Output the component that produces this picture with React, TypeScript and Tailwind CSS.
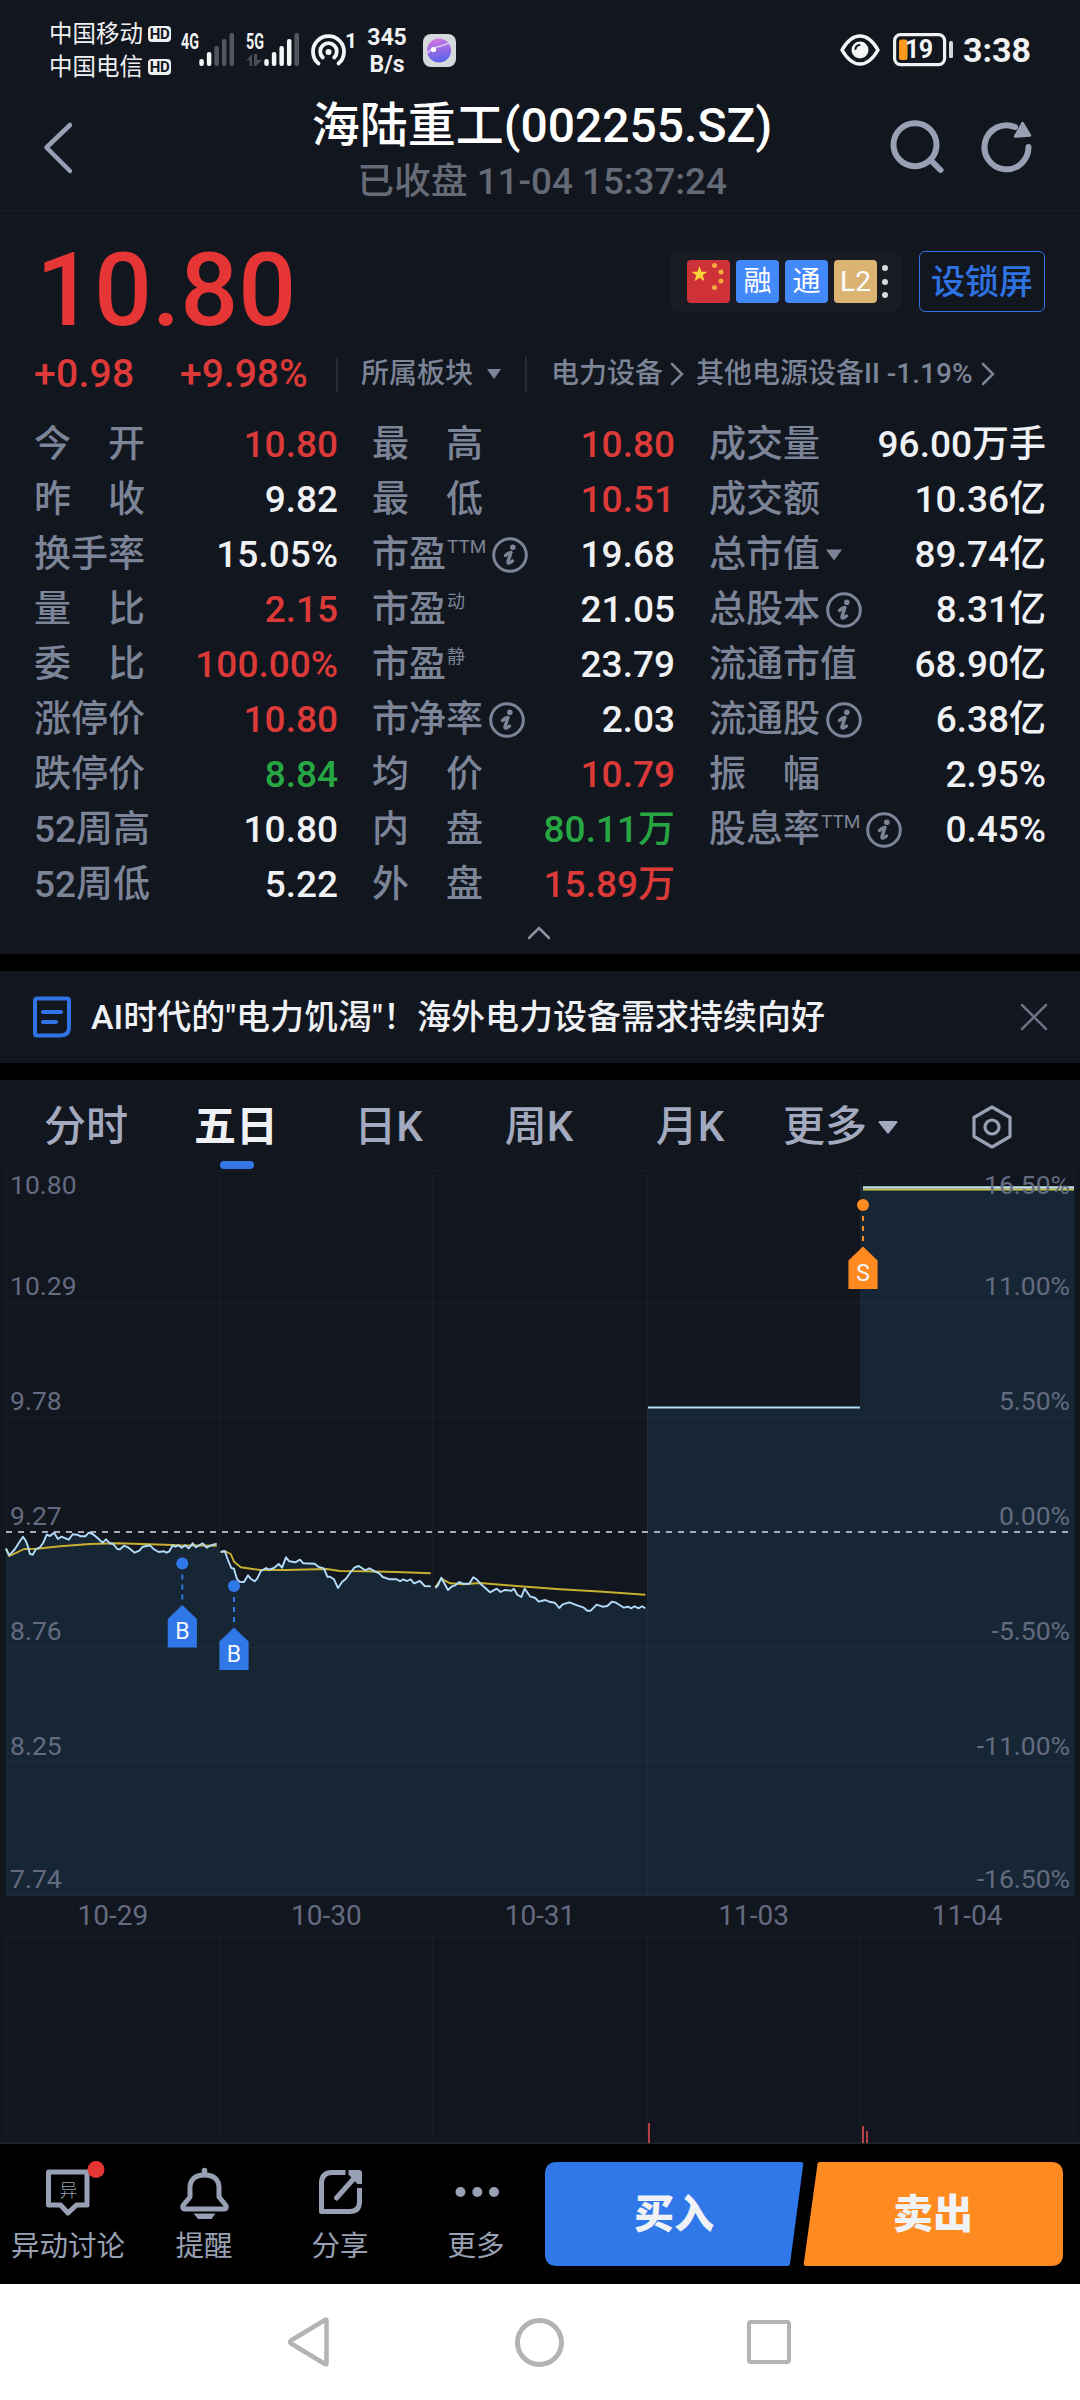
import React from 'react';

type Tone = 'up' | 'down' | 'flat';

interface Stat {
  label: string;
  value: string;
  tone?: Tone;
  sup?: string;
  info?: boolean;
  caret?: boolean;
}

const toneClass: Record<Tone, string> = {
  up: 'text-[#dc3a39]',
  down: 'text-[#27a744]',
  flat: 'text-[#f0f1f5]',
};

const statColumns: Stat[][] = [
  [
    { label: '今开', value: '10.80', tone: 'up' },
    { label: '昨收', value: '9.82' },
    { label: '换手率', value: '15.05%' },
    { label: '量比', value: '2.15', tone: 'up' },
    { label: '委比', value: '100.00%', tone: 'up' },
    { label: '涨停价', value: '10.80', tone: 'up' },
    { label: '跌停价', value: '8.84', tone: 'down' },
    { label: '52周高', value: '10.80' },
    { label: '52周低', value: '5.22' },
  ],
  [
    { label: '最高', value: '10.80', tone: 'up' },
    { label: '最低', value: '10.51', tone: 'up' },
    { label: '市盈', sup: 'TTM', info: true, value: '19.68' },
    { label: '市盈', sup: '动', value: '21.05' },
    { label: '市盈', sup: '静', value: '23.79' },
    { label: '市净率', info: true, value: '2.03' },
    { label: '均价', value: '10.79', tone: 'up' },
    { label: '内盘', value: '80.11万', tone: 'down' },
    { label: '外盘', value: '15.89万', tone: 'up' },
  ],
  [
    { label: '成交量', value: '96.00万手' },
    { label: '成交额', value: '10.36亿' },
    { label: '总市值', caret: true, value: '89.74亿' },
    { label: '总股本', info: true, value: '8.31亿' },
    { label: '流通市值', value: '68.90亿' },
    { label: '流通股', info: true, value: '6.38亿' },
    { label: '振幅', value: '2.95%' },
    { label: '股息率', sup: 'TTM', info: true, value: '0.45%' },
  ],
];

// price and average lines, one entry per trading day
const priceLines = [
  '6,378.3 9.3,385.3 15,379 20,371 23,366.7 25.7,370.7 28,376.7 30,384 32.7,384.7 36,379 40,377.3 43.3,372.7 46.7,364.7 50,366 54,362.7 58,369 61.3,366.7 68.7,369.7 72.7,364.3 77.3,364.7 80.7,366.3 85.3,366.3 88.7,362.7 92.7,364 96.7,367.3 102.7,372.7 106,369.3 110,373.3 113.3,374 117.3,379 120,379.3 124,375.7 128,377.3 134.7,382.7 139.3,380.7 142.7,376.7 150,375.3 154,379.3 158.7,382 164,381.3 166.7,382.7 169.3,381.3 172.7,375.3 175.3,376.7 178.7,375.3 181.7,377.7 185.3,375.3 188.7,378.3 192.7,373.3 196,377.3 202.7,373.3 206.7,377.7 210.7,375.3 216.7,373.7',
  '220.7,382 224.7,381 228,390 231.3,398 234,398.7 236.7,408.3 239.3,411.7 244,412 248,405.3 250.7,408.7 254.7,411.3 257.3,408.3 260.7,401.3 266,398 269.3,399.7 274,398 278.7,394 282,397.7 286,387.3 289.3,391.3 295.3,392.3 300,389.7 303.3,393.3 314.7,393.7 318.7,397 324,398.3 327.3,406.7 330,406.7 334,409.3 338,418 342,412 346,408.7 350,403 354.7,397.3 358.7,396 365.3,400.3 369.3,398.3 375.3,401.7 379.3,403.3 382.7,407 390,409.3 396.7,409.3 400,411.3 403.3,409.3 406.7,411 410.7,409.3 414,413.3 420,411 424.7,416 430.7,416.3',
  '435.3,418 438,415.3 441.3,407.7 444.7,414 448,420 452,416.3 455.3,415.3 459.3,412 462.7,413.7 469.3,413.7 473.3,407.3 476.7,409.3 480.7,414 485.3,418 490,422.3 496.7,418.7 500.7,422 504.7,420 511.3,420.7 514,418.7 517.3,424.7 521.3,427 524.7,418.7 530,426.3 535.3,428 538.7,431.7 545.3,430 549.3,431.7 554.7,432.7 559.3,438 562.7,434.3 569.3,432.3 578,435.7 583.3,437.3 587.3,440.7 590.7,440.7 596.7,434.7 602.7,436.7 607.3,436 612,431.7 616,432.7 624,437.7 628,436.7 631.3,438.3 634.7,436.3 638.7,438.3 642,436.3 645.3,438.3',
];
const averageLines = [
  '6,379 9.3,386 16.7,382.7 24,379 36.7,378.7 60,376.3 90,374 116.7,373.3 150,374.3 180,375.3 216.7,375.7',
  '220.7,382 225.3,381.3 230.7,384 234,391.7 240.7,397.3 260,400 286.7,400 326.7,399 340,401 363.3,401.3 396.7,402 430.7,403.3',
  '435.3,417.3 441.3,408.7 450,413.3 463.3,414.3 480,413 513.3,415.7 560,419.3 603.3,421.7 645.3,424.7',
];

const axisLabels = [
  { y: 24, price: '10.80', pct: '16.50%' },
  { y: 125, price: '10.29', pct: '11.00%' },
  { y: 240, price: '9.78', pct: '5.50%' },
  { y: 355, price: '9.27', pct: '0.00%' },
  { y: 470, price: '8.76', pct: '-5.50%' },
  { y: 585, price: '8.25', pct: '-11.00%' },
  { y: 718, price: '7.74', pct: '-16.50%' },
];

const dayLines = [6.5, 219.5, 432.5, 647.5, 860.5, 1074];

const SignalBars = ({ label, active, data }: { label: string; active: number; data?: boolean }) => (
  <svg width="55" height="36" viewBox="0 0 55 36" className="shrink-0 overflow-visible">
    <text x="0" y="16.5" fontSize="22" fontWeight="700" fill="#f0f1f3" textLength="18" lengthAdjust="spacingAndGlyphs">{label}</text>
    {data && <path d="M0 29l6-7v12H3.500v-6zM8 22h3v6h5l-6 6H8z" fill="#4b4e55" />}
    {[27, 20, 14, 7, 1].map((top, i) => (
      <rect key={i} x={18.300 + i * 7.550} y={top} width="4.500" height={34 - top} rx="2" fill={i < active ? '#f4f5f7' : '#53565d'} />
    ))}
  </svg>
);

const HdBadge = () => (
  <span className="flex h-[16px] w-[23px] items-center justify-center rounded-[4px] bg-[#eff0f2] text-[15px] font-bold leading-none tracking-[-0.5px] text-[#12161e]">HD</span>
);

const StatusBar = () => (
  <div className="flex h-[100px] items-start text-[#f0f1f3]">
    <div className="ml-[49px] mt-[22px] flex w-[122px] flex-col gap-[9px] text-[23.500px] leading-[24px]">
      <div className="flex items-center justify-between whitespace-nowrap">中国移动<HdBadge /></div>
      <div className="flex items-center justify-between whitespace-nowrap">中国电信<HdBadge /></div>
    </div>
    <div className="ml-[10px] mt-[32px]"><SignalBars label="4G" active={2} /></div>
    <div className="ml-[10px] mt-[32px]"><SignalBars label="5G" active={4} data /></div>
    <svg width="48" height="36" viewBox="0 0 48 36" className="ml-[9px] mt-[32px] overflow-visible" fill="none" stroke="#f4f5f7" strokeWidth="3.800" strokeLinecap="round">
      <path d="M8.500 31.500A15.500 15.500 0 1 1 28.500 31.500" />
      <path d="M12.800 25.500A8.300 8.300 0 1 1 24.200 25.500" />
      <circle cx="18.500" cy="20" r="3" fill="#f4f5f7" stroke="none" />
      <text x="35" y="15.500" fontSize="21" fontWeight="700" fill="#f4f5f7" stroke="none">1</text>
    </svg>
    <div className="ml-[8px] mt-[24px] w-[42px] text-center text-[23px] font-bold leading-[27px]">345<br />B/s</div>
    <svg width="34" height="34" viewBox="0 0 34 34" className="ml-[15px] mt-[34px]">
      <defs>
        <linearGradient id="orb" x1="0" y1="0" x2="0.200" y2="1">
          <stop offset="0" stopColor="#d977e0" />
          <stop offset="1" stopColor="#5f63ea" />
        </linearGradient>
      </defs>
      <rect width="33" height="33" rx="8" fill="#d6d9dc" />
      <circle cx="16" cy="16.500" r="12" fill="url(#orb)" />
      <path d="M4 19q6-5 10-6t13-4" stroke="#d6bff3" strokeWidth="1.800" fill="none" />
      <circle cx="10.500" cy="15.500" r="2.600" fill="#fff" />
    </svg>

    <div className="ml-auto mr-[49px] mt-[33px] flex items-center">
      <svg width="40" height="34" viewBox="0 0 40 34" fill="none">
        <path d="M2 17Q10 3 20 3t18 14Q30 31 20 31T2 17z" stroke="#f4f5f7" strokeWidth="3.500" strokeLinejoin="round" />
        <circle cx="20" cy="17" r="8.500" fill="#f4f5f7" />
        <path d="M15.500 16q.3-3.500 4-4" stroke="#12161e" strokeWidth="2" strokeLinecap="round" />
      </svg>
      <svg width="62" height="34" viewBox="0 0 62 34" className="ml-[13px]">
        <rect x="1.600" y="1.600" width="50" height="30" rx="6" fill="none" stroke="#f1f1f3" strokeWidth="3.200" />
        <rect x="56" y="8" width="4" height="17" rx="1.500" fill="#d5d6da" />
        <rect x="6" y="6.500" width="8.500" height="20.500" rx="2.500" fill="#fe9a1b" />
        <text x="12" y="25" fontSize="25" fontWeight="700" fill="#f4f5f7" textLength="28">19</text>
      </svg>
      <span className="ml-[8px] text-[34px] font-bold leading-[34px]">3:38</span>
    </div>
  </div>
);

const Header = () => (
  <div className="flex h-[111px] items-start border-b border-[#191d25]">
    <div className="w-[200px] pl-[41px] pt-[19px]">
      <svg width="34" height="56" viewBox="0 0 34 56" fill="none" stroke="#98a0b4" strokeWidth="4.500" strokeLinecap="round" strokeLinejoin="round">
        <path d="M29 6L5.500 28.500L29 52" />
      </svg>
    </div>
    <div className="flex-1 whitespace-nowrap text-center">
      <div className="-mt-[2px] text-[48px] font-medium leading-[56px] text-white">海陆重工(002255.SZ)</div>
      <div className="mt-[7px] text-[36.800px] font-medium leading-[42px] text-[#656a77]">已收盘 11-04 15:37:24</div>
    </div>
    <div className="flex w-[196px] justify-end gap-[34px] pr-[48px] pt-[19px]">
      <svg width="56" height="56" viewBox="0 0 56 56" fill="none" stroke="#98a0b4" strokeWidth="6" strokeLinecap="round">
        <circle cx="27" cy="25.700" r="21.500" />
        <path d="M43 41.500L52.500 51" />
      </svg>
      <svg width="54" height="56" viewBox="0 0 54 56" fill="none" stroke="#98a0b4" strokeWidth="6" strokeLinecap="round">
        <path d="M50.500 28A22 22 0 1 1 37 8" />
        <path d="M44.500 4L52 16.500L37 17.500z" fill="#98a0b4" strokeWidth="2.500" strokeLinejoin="round" />
      </svg>
    </div>
  </div>
);

const InfoIcon = () => (
  <svg width="36" height="36" viewBox="0 0 36 36" className="ml-[6px] shrink-0" fill="none" stroke="#7c8497">
    <circle cx="18" cy="18" r="16.300" strokeWidth="3" />
    <circle cx="20.800" cy="10.300" r="2.800" fill="#7c8497" stroke="none" />
    <path d="M13.500 18.500q2-2.500 5.500-3L16 24.500q-.5 3.500 4.500-.5" strokeWidth="3.400" strokeLinecap="round" strokeLinejoin="round" />
  </svg>
);

const Chevron = ({ className }: { className?: string }) => (
  <svg width="14" height="24" viewBox="0 0 14 24" className={className} fill="none" stroke="#7c8497" strokeWidth="2.500" strokeLinecap="round">
    <path d="M2 2L12 12L2 22" />
  </svg>
);

const StatRow = ({ stat }: { stat: Stat }) => (
  <div className="flex h-[55px] items-center justify-between whitespace-nowrap text-[37px] font-medium leading-[44px]">
    <div className="flex items-center text-[#7c8497]">
      {stat.label.length === 2 && !stat.sup ? (
        <span className="flex w-[111px] justify-between"><span>{stat.label[0]}</span><span>{stat.label[1]}</span></span>
      ) : (
        <span>{stat.label}</span>
      )}
      {stat.sup && <span className={`ml-[1px] self-start font-normal leading-[28px] ${stat.sup === 'TTM' ? 'text-[19px]' : 'text-[18px]'}`}>{stat.sup}</span>}
      {stat.info && <InfoIcon />}
      {stat.caret && <svg width="18" height="12" viewBox="0 0 18 12" className="ml-[5px]"><path d="M1 0.500h16L9 11.500z" fill="#7c8497" /></svg>}
    </div>
    <span className={toneClass[stat.tone ?? 'flat']}>{stat.value}</span>
  </div>
);

const Quote = () => (
  <div className="h-[743px]">
    <div className="flex h-[130px] items-start pl-[36px] pr-[35px] pt-[40px]">
      <div className="pt-[1px] text-[102px] font-medium leading-[76px] text-[#e53635]">10.80</div>
      <div className="ml-auto flex h-[61px] w-[233px] items-center gap-[6px] rounded-[12px] bg-[#1a1c23] pl-[18px] text-[28px] leading-none text-white">
        <svg width="43" height="43" viewBox="0 0 43 43">
          <rect width="43" height="43" rx="4" fill="#ce3137" />
          <path d="M12.500 6l2 5.700h6l-4.800 3.600 1.800 5.900-5-3.500-5 3.500 1.800-5.900-4.800-3.600h6z" fill="#fbd437" />
          <g fill="#f3ab40">
            <circle cx="27.500" cy="5.500" r="2.500" />
            <circle cx="34" cy="12" r="2.500" />
            <circle cx="34" cy="21" r="2.500" />
            <circle cx="27.500" cy="27.500" r="2.500" />
          </g>
        </svg>
        <span className="flex size-[43px] items-center justify-center rounded-[4px] bg-[#4489fb]">融</span>
        <span className="flex size-[43px] items-center justify-center rounded-[4px] bg-[#4489fb]">通</span>
        <span className="flex size-[43px] items-center justify-center rounded-[4px] bg-[#dbb474]">L2</span>
        <span className="-ml-[1px] flex flex-col gap-[7.500px]">
          <i className="size-[6px] rounded-full bg-[#d9dade]" />
          <i className="size-[6px] rounded-full bg-[#d9dade]" />
          <i className="size-[6px] rounded-full bg-[#d9dade]" />
        </span>
      </div>
      <button className="ml-[17px] h-[61px] w-[126px] rounded-[6px] border-[1.500px] border-[#2f73e2] text-[34px] font-medium leading-none text-[#2f73e2]">设锁屏</button>
    </div>

    <div className="flex h-[66px] items-center whitespace-nowrap pl-[34px] text-[28px] text-[#7c8497]">
      <span className="w-[146px] text-[39px] font-medium tracking-[0.3px] text-[#dc3a39]">+0.98</span>
      <span className="w-[156px] text-[39px] font-medium text-[#dc3a39]">+9.98%</span>
      <span className="h-[35px] w-[2px] bg-[#252a36]" />
      <span className="ml-[23px] font-medium">所属板块</span>
      <svg width="14" height="10" viewBox="0 0 14 10" className="ml-[14px]"><path d="M0 0h14L7 10z" fill="#7c8497" /></svg>
      <span className="ml-[24px] h-[35px] w-[2px] bg-[#252a36]" />
      <span className="ml-[24px] font-medium">电力设备</span>
      <Chevron className="ml-[7px]" />
      <span className="ml-[12px] font-medium">其他电源设备II -1.19%</span>
      <Chevron className="ml-[8px]" />
    </div>

    <div className="mt-[10.500px] flex gap-[34px] pl-[34px]">
      <div className="w-[304px]">{statColumns[0].map((s) => <StatRow key={s.label} stat={s} />)}</div>
      <div className="w-[303px]">{statColumns[1].map((s) => <StatRow key={s.label + (s.sup ?? '')} stat={s} />)}</div>
      <div className="w-[337px]">{statColumns[2].map((s) => <StatRow key={s.label} stat={s} />)}</div>
    </div>
    <svg width="24" height="14" viewBox="0 0 24 14" className="ml-[527px] mt-[13.500px]" fill="none" stroke="#8c93a5" strokeWidth="2.500" strokeLinecap="round">
      <path d="M2 12L12 2L22 12" />
    </svg>
  </div>
);

const NewsBar = () => (
  <div className="flex h-[126px] items-center border-y-[17px] border-black pl-[33px] pr-[32px]">
    <svg width="38" height="42" viewBox="0 0 38 42" fill="none" stroke="#2f73e4" strokeWidth="4">
      <path d="M4 2.500h30a2 2 0 0 1 2 2V31q0 8.500-8.500 8.500H4a2 2 0 0 1-2-2V4.500a2 2 0 0 1 2-2z" />
      <path d="M10 16h18M10 26h13" strokeLinecap="round" />
    </svg>
    <span className="ml-[20px] whitespace-nowrap text-[34px] font-medium leading-[44px] text-[#f0f1f5]">AI时代的"电力饥渴"！海外电力设备需求持续向好</span>
    <svg width="28" height="28" viewBox="0 0 28 28" className="ml-auto" stroke="#6b7286" strokeWidth="2.500" strokeLinecap="round">
      <path d="M2 2L26 26M26 2L2 26" />
    </svg>
  </div>
);

const Tabs = () => (
  <div className="flex h-[90px] items-start pt-[21px] text-center text-[42px] font-medium leading-[52px] text-[#a3aabf]">
    <span className="ml-[10px] w-[152px]">分时</span>
    <div className="flex w-[150px] flex-col items-center">
      <span className="relative right-[1px] font-bold text-[#f0f1f5]">五日</span>
      <span className="mt-[8px] h-[8px] w-[34px] rounded-full bg-[#3478e6]" />
    </div>
    <span className="w-[153px]">日K</span>
    <span className="w-[148px]">周K</span>
    <span className="w-[154px]">月K</span>
    <span className="ml-[16px] flex items-center">
      更多
      <svg width="20" height="13" viewBox="0 0 20 13" className="ml-[11px]"><path d="M1.500 0h17q1.500 0 .8 1.500L11 12q-1 1-2 0L.7 1.500Q0 0 1.500 0z" fill="#a3aabf" /></svg>
    </span>
    <svg width="42" height="44" viewBox="0 0 42 44" className="ml-[73px] mt-[4px]" fill="none" stroke="#98a0b4" strokeWidth="3.200" strokeLinejoin="round">
      <path d="M21 2L39 12.500V31.500L21 42L3 31.500V12.500z" />
      <circle cx="21" cy="22" r="7" />
    </svg>
  </div>
);

const Marker = ({ x, y, text, color }: { x: number; y: number; text: string; color: string }) => (
  <g transform={`translate(${x} ${y})`}>
    <circle r="6" fill={color} />
    <path d="M0 11V38" stroke={color} strokeWidth="2" strokeDasharray="5 5" />
    <path d="M0 41.500L14.600 55.500V84H-14.600V55.500z" fill={color} />
    <text y="75.500" textAnchor="middle" fontSize="23" fill="#f2f6fd">{text}</text>
  </g>
);

const PriceChart = () => (
  <svg width="1080" height="726" viewBox="0 0 1080 726" className="block">
    {priceLines.map((points, i) => {
      const first = points.split(' ')[0].split(',')[0];
      return <polygon key={i} points={`${i === 0 ? first : dayLines[i]},726 ${i === 0 ? first : dayLines[i]},${points.split(' ')[0].split(',')[1]} ${points} ${dayLines[i + 1]},${points.slice(points.lastIndexOf(',') + 1)} ${dayLines[i + 1]},726`} fill="#172635" />;
    })}
    <rect x="647" y="237.500" width="213.500" height="489" fill="#172635" />
    <rect x="860.500" y="17" width="213.500" height="709" fill="#172635" />
    <g stroke="#ffffff" strokeOpacity="0.028" strokeWidth="1.500">
      {dayLines.map((x) => <path key={x} d={`M${x} 0V726`} />)}
      {[0.5, 132, 247, 477, 592, 725].map((y) => <path key={y} d={`M6 ${y}H1074`} />)}
    </g>
    <path d="M6 362H1074" stroke="#a9adb9" strokeWidth="2" strokeDasharray="6 6" />
    <g fill="none" strokeWidth="1.900" strokeLinejoin="round">
      {averageLines.map((points, i) => <polyline key={i} points={points} stroke="#c7b02f" />)}
      {priceLines.map((points, i) => <polyline key={i} points={points} stroke="#b3dcfb" />)}
      <path d="M648 237.500H860" stroke="#b3dcfb" />
      <path d="M863 19.500H1074" stroke="#c9c74f" strokeWidth="2" />
      <path d="M863 17.300H1074" stroke="#c5e2ee" strokeWidth="2.200" />
    </g>
    <g fontSize="26.500" fill="#646b80">
      {axisLabels.map((l) => (
        <React.Fragment key={l.price}>
          <text x="10" y={l.y}>{l.price}</text>
          <text x="1070" y={l.y} textAnchor="end">{l.pct}</text>
        </React.Fragment>
      ))}
    </g>
    <Marker x={182.3} y={393.5} text="B" color="#3078e8" />
    <Marker x={234} y={416} text="B" color="#3078e8" />
    <Marker x={863} y={35} text="S" color="#ff8a20" />
  </svg>
);

const VolumeChart = () => (
  <svg width="1080" height="208" viewBox="0 0 1080 208" className="block">
    <g stroke="#ffffff" strokeOpacity="0.028" strokeWidth="1.500">
      {dayLines.map((x) => <path key={x} d={`M${x} 0V207`} />)}
      <path d="M6 0.500H1074" />
    </g>
    <path d="M0 207.300H1080" stroke="#1f232b" strokeWidth="1.400" />
    <path d="M649 187V207M863 190V207M867 195V207" stroke="#d4494b" strokeWidth="1.700" />
  </svg>
);

const actions = [
  {
    label: '异动讨论',
    icon: (
      <>
        <path d="M10.500 10H49V43H38.500L30 51L22.500 43H10.500z" strokeLinejoin="round" />
        <text x="30.500" y="35" fontSize="18" fontWeight="300" textAnchor="middle" fill="#98a0b4" stroke="none">异</text>
        <circle cx="58" cy="7.500" r="8.500" fill="#e53635" stroke="none" />
      </>
    ),
  },
  {
    label: '提醒',
    icon: (
      <>
        <path d="M30.500 8.500V12" strokeWidth="5.500" strokeLinecap="round" />
        <path d="M30.500 13C20.500 13 16 18 16 26V35L9 43.500Q8 47 10.500 47H50.500Q53 47 52 43.500L45 35V26C45 18 40.500 13 30.500 13z" strokeLinejoin="round" />
        <path d="M19.500 51.500H41.500L37.500 57H24z" fill="#98a0b4" stroke="none" />
      </>
    ),
  },
  {
    label: '分享',
    icon: (
      <>
        <path d="M35.500 10.500H22Q11.500 10.500 11.500 21.500V49.500H40Q49.500 49.500 49.500 39.500V26" strokeLinejoin="round" />
        <path d="M26.500 36L47 13" strokeLinecap="round" />
        <path d="M38.500 8H49Q52 8 52 11V22H47.500L38.500 12.500z" fill="#98a0b4" stroke="none" />
      </>
    ),
  },
  {
    label: '更多',
    icon: (
      <g fill="#98a0b4" stroke="none">
        <circle cx="14.500" cy="30" r="5" />
        <circle cx="31.300" cy="30" r="5" />
        <circle cx="48" cy="30" r="5" />
      </g>
    ),
  },
];

const ActionBar = () => (
  <div className="flex h-[140px] bg-black">
    {actions.map((a) => (
      <div key={a.label} className="flex w-[136px] flex-col items-center pt-[18px]">
        <svg width="60" height="60" viewBox="0 0 60 60" fill="none" stroke="#98a0b4" strokeWidth="5" className="overflow-visible">{a.icon}</svg>
        <span className="mt-[8px] whitespace-nowrap text-[28.500px] leading-[34px] text-[#98a0b4]">{a.label}</span>
      </div>
    ))}
    <div className="relative ml-[1px] mt-[18px] h-[104px] w-[518px]">
      <svg width="518" height="104" viewBox="0 0 518 104" className="block">
        <path d="M12 0H256q2.500 0 2.200 2.500L245 102q-.3 2-2.500 2H12Q0 104 0 92V12Q0 0 12 0z" fill="#3078ea" />
        <path d="M275 0H506Q518 0 518 12V92Q518 104 506 104H261q-2.500 0-2.200-2.500L272.500 2q.3-2 2.500-2z" fill="#ff8a20" />
      </svg>
      <div className="absolute inset-0 flex items-center pt-[2px] text-center text-[40px] font-black leading-none text-[#f1f2f6]">
        <span className="w-[258px]">买入</span>
        <span className="w-[260px]">卖出</span>
      </div>
    </div>
  </div>
);

const NavBar = () => (
  <div className="flex h-[116px] items-center justify-center bg-white pr-[2px]">
    <svg width="44" height="50" viewBox="0 0 44 50" fill="none" stroke="#b3b3b3" strokeWidth="4.500" strokeLinejoin="round">
      <path d="M39.500 3.500V46.500Q39.500 48 38 47L4 26.500Q2 25 4 23.500L38 3q1.500-1 1.500.5z" />
    </svg>
    <span className="ml-[184px] mr-[183px] size-[49px] rounded-full border-[5px] border-[#b3b3b3]" />
    <span className="size-[44px] rounded-[4px] border-[4.500px] border-[#b3b3b3]" />
  </div>
);

export default function App() {
  return (
    <div lang="zh-CN" className="h-[2400px] w-[1080px] overflow-hidden bg-[#12161e] font-['Roboto','Noto_Sans_CJK_SC',sans-serif]">
      <StatusBar />
      <Header />
      <Quote />
      <NewsBar />
      <Tabs />
      <PriceChart />
      <div className="flex h-[40px] items-center px-[6px] text-center text-[28px] leading-none text-[#646b80]">
        {['10-29', '10-30', '10-31', '11-03', '11-04'].map((d) => <span key={d} className="flex-1">{d}</span>)}
      </div>
      <VolumeChart />
      <ActionBar />
      <NavBar />
    </div>
  );
}
